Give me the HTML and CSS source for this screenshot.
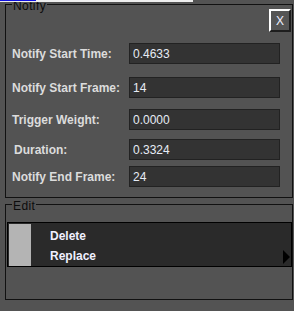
FILE: index.html
```html
<!DOCTYPE html>
<html lang="en">
<head>
    <meta charset="UTF-8">
    <title>Notify</title>
    <link rel="stylesheet" href="styles.css">
</head>
<body>

    <div class="top-strip"><span class="top-blue"></span></div>

    <fieldset class="group notify">
        <legend>Notify</legend>
        <div class="close-row">
            <button class="close-btn">X</button>
        </div>
        <div class="field row1">
            <label>Notify Start Time:</label>
            <input type="text" value="0.4633">
        </div>
        <div class="field row2">
            <label>Notify Start Frame:</label>
            <input type="text" value="14">
        </div>
        <div class="field row3">
            <label>Trigger Weight:</label>
            <input type="text" value="0.0000">
        </div>
        <div class="field row4">
            <label class="indent">Duration:</label>
            <input type="text" value="0.3324">
        </div>
        <div class="field row5">
            <label>Notify End Frame:</label>
            <input type="text" value="24">
        </div>
    </fieldset>

    <fieldset class="group edit">
        <legend>Edit</legend>
        <div class="menu">
            <div class="swatch"></div>
            <div class="menu-items">
                <div>Delete</div>
                <div>Replace</div>
            </div>
            <div class="arrow"></div>
        </div>
    </fieldset>

</body>
</html>
```

FILE: styles.css
```css
* {
    margin: 0;
    padding: 0;
    box-sizing: border-box;
    font-family: "Liberation Sans", Arial, sans-serif;
}
body {
    background-color: #535353;
    width: 294px;
    height: 311px;
    position: relative;
    overflow: hidden;
}
/* strip from the window above */
.top-strip {
    position: absolute;
    top: 0;
    left: 0;
    width: 193px;
    height: 2px;
    background: #eeeeee;
}
.top-blue {
    display: block;
    width: 36px;
    height: 1px;
    background: #1010e0;
}
.group {
    border: 1px solid #111;
    margin-left: 5px;
    width: 288px;
    min-width: 0;
}
.group legend {
    font-size: 12px;
    letter-spacing: 0.4px;
    line-height: 5px;
    padding: 4px 1px 0 1px;
    color: #0c0c0c;
}
.notify {
    height: 198px;
    padding: 0 0 0 6px;
}
.edit {
    height: 100px;
    margin-top: 2px;
    padding: 0 0 0 1px;
}
.edit legend {
    margin-left: 5px;
}
.close-row {
    display: flex;
    justify-content: flex-end;
}
.close-btn {
    width: 22px;
    height: 23px;
    margin-right: 1px;
    background: #555;
    border: 2px solid;
    border-color: #fff #1e1e1e #1e1e1e #fff;
    color: #eef0ff;
    font-size: 12px;
}
.field {
    display: flex;
    align-items: center;
    height: 21px;
}
.field label {
    width: 117px;
    font-size: 12px;
    font-weight: bold;
    color: #dcdcdc;
}
.field label.indent {
    padding-left: 2px;
}
.field input {
    width: 151px;
    height: 21px;
    background: #333;
    border: 1px solid #222;
    color: #e6ecf5;
    font-size: 12px;
    padding-left: 3px;
    outline: none;
}
.row1 { margin-top: 11px; }
.row2 { margin-top: 13px; }
.row3 { margin-top: 11px; }
.row4 { margin-top: 9px; }
.row5 { margin-top: 6px; }
.menu {
    display: flex;
    width: 285px;
    height: 45px;
    margin-top: 13px;
    border: 1px solid #000;
    background: #2a2a2a;
    padding: 1px 0 0 1px;
}
.swatch {
    width: 22px;
    background: #b4b4b4;
}
.menu-items {
    flex: 1;
    padding: 2px 0 0 19px;
    font-size: 12px;
    font-weight: bold;
    line-height: 20px;
    color: #f0f0ff;
}
.arrow {
    align-self: flex-end;
    width: 0;
    height: 0;
    margin: 0 1px 2px 0;
    border-left: 7px solid #000;
    border-top: 7px solid transparent;
    border-bottom: 7px solid transparent;
}
```
